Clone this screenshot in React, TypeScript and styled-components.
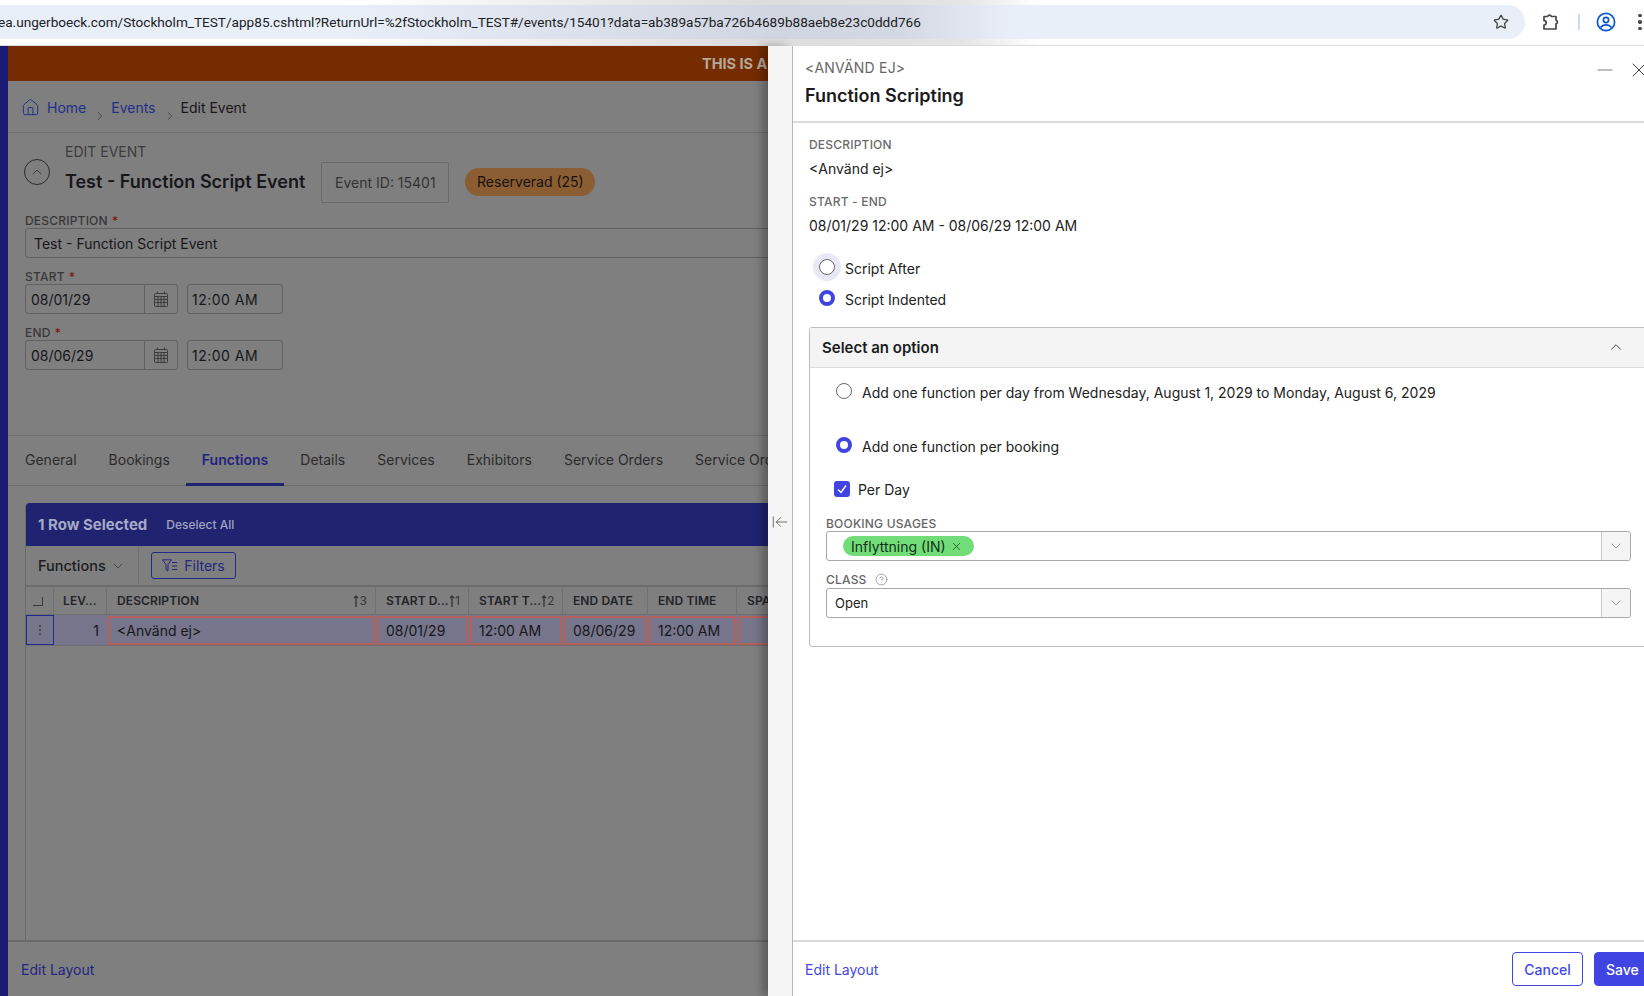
import styled, { createGlobalStyle } from "styled-components";
import { ChevronDown, ChevronUp, ChevronRight, Home, Minus, X, Star, CircleHelp, ArrowLeftToLine, EllipsisVertical } from "lucide-react";

const GlobalStyle = createGlobalStyle`
  html, body { margin: 0; padding: 0; background: #fff; }
  body { font-family: Inter, "Liberation Sans", sans-serif; color: #1d1d22; overflow: hidden; }
  * { box-sizing: border-box; }
`;

const Screen = styled.div`
  width: 1644px;
  height: 996px;
  overflow: hidden;
  display: flex;
  flex-direction: column;
`;

/* browser chrome */
const ChromeBar = styled.header`
  height: 46px;
  flex: none;
  display: flex;
  align-items: flex-start;
  padding-top: 5px;
  border-bottom: 1px solid #dadce0;
  background: linear-gradient(90deg, #fff 360px, #dcdcdc 760px, #e4e4e4 960px, #fff 1040px);
`;
const UrlPill = styled.div`
  width: 1525px;
  height: 34px;
  flex: none;
  display: flex;
  align-items: center;
  border-radius: 0 17px 17px 0;
  background: linear-gradient(90deg, #e9eff8 340px, #d0d5df 780px, #d3d8e2 900px, #e9eff8 1010px);
  padding-right: 16px;
  overflow: hidden;
`;
const UrlText = styled.div`
  flex: 1;
  margin-left: -2px;
  font-family: Roboto, sans-serif;
  font-size: 13.6px;
  color: #202124;
  white-space: nowrap;
`;
const ChromeIcons = styled.div`
  display: flex;
  align-items: center;
  height: 34px;
  margin-left: 17px;
`;
const Separator = styled.div`
  width: 2px;
  height: 16px;
  background: #c9dcf5;
  margin: 0 16px 0 18px;
`;
const Dots = styled.div`
  display: flex;
  flex-direction: column;
  gap: 3px;
  margin-left: 22px;
  & > i { width: 3.5px; height: 3.5px; border-radius: 50%; background: #444746; display: block; }
`;

const Main = styled.div`
  flex: 1;
  display: flex;
  min-height: 0;
`;

/* dimmed page behind the drawer */
const Rail = styled.div`
  width: 8px;
  flex: none;
  background: #1a1a72;
`;
const Page = styled.div`
  width: 760px;
  flex: none;
  background: #7f7f7f;
  display: flex;
  flex-direction: column;
  overflow: hidden;
  font-size: 14px;
`;
const Banner = styled.div`
  height: 35px;
  flex: none;
  background: #752c00;
  color: #b5a89c;
  font-weight: 700;
  font-size: 14.5px;
  display: flex;
  align-items: center;
  padding-left: 694px;
  white-space: nowrap;
`;
const Breadcrumbs = styled.nav`
  height: 52px;
  flex: none;
  display: flex;
  align-items: center;
  padding: 2px 0 0 13px;
  border-bottom: 1px solid #6e6e6e;
`;
const Crumb = styled.span<{ $link?: boolean }>`
  color: ${(p) => (p.$link ? "#1f2f8c" : "#18181c")};
  display: inline-flex;
  align-items: center;
  gap: 7px;
`;
const CrumbSep = styled.span`
  color: #2c2c2c;
  display: inline-flex;
  margin: 16px 4px 0 7px;
`;
const EventHead = styled.div`
  display: flex;
  align-items: center;
  height: 74px;
  padding-left: 16px;
  flex: none;
`;
const CollapseBtn = styled.div`
  width: 26px;
  height: 26px;
  margin-top: 4px;
  border: 1.2px solid #2c2c2c;
  border-radius: 50%;
  display: flex;
  align-items: center;
  justify-content: center;
  color: #2c2c2c;
  margin-right: 15px;
`;
const HeadText = styled.div`
  display: flex;
  flex-direction: column;
  gap: 11px;
  margin-top: -4px;
`;
const Eyebrow = styled.div`
  font-size: 14px;
  color: #3c3c3c;
  line-height: 17px;
`;
const EventTitle = styled.div`
  font-size: 18px;
  font-weight: 600;
  color: #17171b;
  line-height: 22px;
`;
const EventId = styled.div`
  margin-left: 16px;
  width: 128px;
  height: 41px;
  border: 1px solid #6a6a6a;
  border-radius: 2px;
  display: flex;
  align-items: center;
  justify-content: center;
  color: #333;
  font-size: 14px;
  margin-top: 25px;
`;
const StatusBadge = styled.div`
  margin-left: 16px;
  width: 130px;
  height: 28px;
  border-radius: 14px;
  background: #8a5d33;
  display: flex;
  align-items: center;
  justify-content: center;
  color: #17120c;
  font-size: 14px;
  margin-top: 23px;
`;
const Form = styled.div`
  padding: 6px 0 0 17px;
  flex: none;
  height: 229px;
  border-bottom: 1px solid #6e6e6e;
`;
const DarkLabel = styled.div`
  font-size: 12px;
  font-weight: 500;
  line-height: 15px;
  color: #383838;
  letter-spacing: 0.2px;
  & > b { color: #7a1f14; font-weight: 600; margin-left: 4px; }
`;
const DarkInput = styled.div`
  width: 760px;
  height: 30px;
  border: 1px solid #616161;
  border-radius: 3px;
  display: flex;
  align-items: center;
  padding-left: 8px;
  color: #17171b;
  font-size: 14px;
  white-space: nowrap;
  flex: none;
`;
const TimeInput = styled(DarkInput)`
  width: 96px;
  padding-left: 4px;
  letter-spacing: 0.5px;
`;
const DateRow = styled.div`
  display: flex;
  gap: 9px;
  margin-bottom: 11px;
`;
const DateBox = styled.div`
  width: 153px;
  height: 30px;
  border: 1px solid #616161;
  border-radius: 3px;
  display: flex;
  align-items: center;
  color: #17171b;
`;
const DateValue = styled.div`
  flex: 1;
  padding-left: 5px;
`;
const CalendarCell = styled.div`
  width: 33px;
  height: 100%;
  border-left: 1px solid #616161;
  display: flex;
  align-items: center;
  justify-content: center;
`;
const DescGroup = styled.div`
  margin-bottom: 11px;
`;
const Tabs = styled.div`
  display: flex;
  height: 50px;
  flex: none;
  padding-left: 1px;
  border-bottom: 1px solid #6e6e6e;
  white-space: nowrap;
`;
const Tab = styled.div<{ $active?: boolean }>`
  padding: 0 16px 1px;
  display: flex;
  align-items: center;
  height: 50px;
  color: ${(p) => (p.$active ? "#1f2380" : "#2b2b2b")};
  font-weight: ${(p) => (p.$active ? 600 : 400)};
  border-bottom: 3px solid ${(p) => (p.$active ? "#1f2370" : "transparent")};
`;
const GridWrap = styled.div`
  flex: 1;
  min-height: 0;
  margin: 17px 0 0 17px;
  width: 760px;
  border-left: 1px solid #6a6a6a;
  border-top-left-radius: 4px;
  display: flex;
  flex-direction: column;
`;
const SelectionBar = styled.div`
  height: 43px;
  flex: none;
  background: #1f2370;
  border-top-left-radius: 4px;
  display: flex;
  align-items: center;
  padding-left: 12px;
  color: #a9abc4;
`;
const SelectedCount = styled.span`
  font-weight: 700;
  font-size: 15px;
  color: #a6a9c6;
`;
const Deselect = styled.span`
  font-size: 12px;
  font-weight: 500;
  margin-left: 19px;
  color: #a0a3c0;
`;
const GridTools = styled.div`
  height: 41px;
  flex: none;
  display: flex;
  align-items: center;
  border-bottom: 2px solid #6c6c6c;
`;
const ViewPicker = styled.div`
  width: 113px;
  height: 100%;
  padding-left: 12px;
  display: flex;
  align-items: center;
  gap: 4px;
  color: #1c1c22;
  font-weight: 500;
  font-size: 14.5px;
  border-right: 1px solid #717171;
`;
const FilterBtn = styled.div`
  margin-left: 12px;
  width: 85px;
  height: 27px;
  border: 1px solid #24288a;
  border-radius: 3px;
  display: flex;
  align-items: center;
  justify-content: center;
  gap: 6px;
  color: #23277f;
`;
const GridRow = styled.div<{ $body?: boolean }>`
  display: grid;
  grid-template-columns: 28px 53px 269px 93px 94px 85px 89px 49px;
  height: ${(p) => (p.$body ? "31px" : "28px")};
  flex: none;
  border-bottom: 1px solid #6f6f6f;
  background: ${(p) => (p.$body ? "#76758b" : "transparent")};
`;
const HeadCell = styled.div`
  border-right: 1px solid #727272;
  display: flex;
  align-items: center;
  justify-content: space-between;
  padding: 0 8px 0 10px;
  font-size: 12px;
  font-weight: 600;
  color: #232328;
  white-space: nowrap;
  overflow: hidden;
  letter-spacing: 0.1px;
`;
const LevelHead = styled(HeadCell)`
  padding-left: 9px;
`;
const SortMark = styled.span`
  display: inline-flex;
  align-items: center;
  font-weight: 400;
  font-size: 12px;
  color: #38383c;
`;
const TickBox = styled.span`
  width: 10px;
  height: 9px;
  margin: 2px 0 0 -3px;
  border-right: 1.5px solid #3a3a3a;
  border-bottom: 1.5px solid #3a3a3a;
  display: block;
`;
const HandleCell = styled.div`
  border: 1px solid #24288f;
  background: #77768a;
  display: flex;
  align-items: center;
  justify-content: center;
  color: #4a4a4a;
`;
const LevelCell = styled.div`
  display: flex;
  align-items: center;
  justify-content: flex-end;
  padding-right: 8px;
  font-size: 14px;
  color: #17171b;
`;
const ErrorCell = styled.div`
  border: 2px solid #b4605a;
  margin: 1px 1px 0;
  display: flex;
  align-items: center;
  padding-left: 7px;
  font-size: 14px;
  color: #17171b;
  white-space: nowrap;
  overflow: hidden;
`;
const PageFooter = styled.div`
  height: 56px;
  flex: none;
  display: flex;
  align-items: center;
  border-top: 2px solid #6a6a6a;
  padding-left: 13px;
`;
const EditLayout = styled.span<{ $dim?: boolean }>`
  color: ${(p) => (p.$dim ? "#22267f" : "#4249e3")};
  font-size: 14px;
`;

/* drawer */
const Gutter = styled.div`
  width: 24px;
  flex: none;
  background: #f5f5f5;
  box-shadow: -6px 0 10px rgba(0, 0, 0, 0.28);
  position: relative;
  display: flex;
  align-items: center;
  justify-content: center;
  color: #555;
  padding-top: 1px;
`;
const Drawer = styled.aside`
  width: 900px;
  flex: none;
  background: #fff;
  border-left: 1px solid #b8b8b8;
  display: flex;
  flex-direction: column;
  font-size: 14px;
  position: relative;
`;
const DrawerHead = styled.div`
  height: 77px;
  flex: none;
  width: 852px;
  padding: 13px 0 0 12px;
  border-bottom: 2px solid #dcdcdc;
  position: relative;
`;
const HeadSub = styled.div`
  color: #666;
  font-size: 14px;
  line-height: 17px;
  letter-spacing: 0.2px;
`;
const HeadTitle = styled.div`
  font-size: 18px;
  font-weight: 600;
  line-height: 22px;
  margin-top: 9px;
  color: #1b1b20;
`;
const HeadActions = styled.div`
  position: absolute;
  top: 12px;
  right: -6px;
  display: flex;
  align-items: center;
  gap: 10px;
  color: #a9a9a9;
`;
const DrawerBody = styled.div`
  flex: 1;
  min-height: 0;
  padding: 14px 0 0 16px;
`;
const MetaLabel = styled.div`
  font-size: 12px;
  font-weight: 500;
  color: #6b6b6b;
  line-height: 15px;
  letter-spacing: 0.2px;
`;
const MetaValue = styled.div`
  font-size: 14px;
  line-height: 17px;
  margin: 8px 0 17px;
  color: #222;
`;
const RadioGroup = styled.div`
  margin-top: 19px;
`;
const RadioRow = styled.div<{ $h?: number; $indent?: number; $mt?: number }>`
  display: flex;
  align-items: center;
  height: ${(p) => p.$h ?? 31}px;
  padding-left: ${(p) => p.$indent ?? 10}px;
  margin-top: ${(p) => p.$mt ?? 0}px;
  gap: 10px;
  color: #222;
`;
const RadioDot = styled.span<{ $on?: boolean; $halo?: boolean }>`
  width: 16px;
  height: 16px;
  margin-top: -3px;
  border-radius: 50%;
  flex: none;
  background: #fff;
  border: ${(p) => (p.$on ? "4.5px solid #4045e2" : "1px solid #6a6a6a")};
  box-shadow: ${(p) => (p.$halo ? "0 0 0 6px #e8e8f6" : "none")};
`;
const OptionBox = styled.section`
  margin-top: 12px;
  width: 880px;
  height: 320px;
  border: 1px solid #bdbdbd;
  border-radius: 3px;
`;
const OptionHead = styled.div`
  height: 40px;
  background: #f4f4f4;
  border-bottom: 1px solid #dcdcdc;
  display: flex;
  align-items: center;
  padding: 0 0 0 12px;
  font-size: 15px;
  font-weight: 600;
  color: #1b1b20;
  position: relative;
`;
const Chevron = styled.span`
  position: absolute;
  left: 797px;
  top: 10px;
  color: #333;
  display: flex;
`;
const OptionBody = styled.div`
  padding-top: 7px;
`;
const CheckRow = styled.div`
  display: flex;
  align-items: center;
  gap: 8px;
  padding-left: 24px;
  height: 20px;
  margin: 16px 0 17px;
  color: #222;
`;
const CheckBox = styled.span`
  width: 16px;
  height: 16px;
  border-radius: 3px;
  background: #4045e2;
  display: flex;
  align-items: center;
  justify-content: center;
`;
const FieldLabel = styled(MetaLabel)`
  margin-left: 16px;
  display: flex;
  align-items: center;
  gap: 8px;
  color: #666;
`;
const SelectField = styled.div`
  margin: 0 0 11px 16px;
  width: 805px;
  height: 30px;
  border: 1px solid #a8a8a8;
  border-radius: 3px;
  display: flex;
  align-items: center;
`;
const ClassField = styled(SelectField)`
  margin-top: 1px;
`;
const SelectValue = styled.div`
  flex: 1;
  padding-left: 8px;
  font-size: 13px;
  color: #222;
`;
const ChipArea = styled.div`
  flex: 1;
  padding-left: 16px;
`;
const Chip = styled.span`
  display: inline-flex;
  align-items: center;
  gap: 4px;
  height: 20px;
  width: 131px;
  padding-left: 8px;
  border-radius: 10px;
  background: #72dd78;
  color: #10301a;
  font-size: 14px;
`;
const SelectArrow = styled.div`
  width: 29px;
  height: 100%;
  flex: none;
  background: #f5f5f5;
  border-left: 1px solid #c8c8c8;
  display: flex;
  align-items: center;
  justify-content: center;
  color: #777;
  border-radius: 0 3px 3px 0;
`;
const DrawerFoot = styled.div`
  height: 56px;
  flex: none;
  width: 899px;
  display: flex;
  align-items: center;
  border-top: 2px solid #d9d9d9;
  padding-left: 12px;
`;
const Btn = styled.button<{ $primary?: boolean }>`
  height: 34px;
  border-radius: 4px;
  font-family: inherit;
  font-size: 14px;
  font-weight: 500;
  border: 1px solid #4045e2;
  background: ${(p) => (p.$primary ? "#4045e2" : "#fff")};
  color: ${(p) => (p.$primary ? "#fff" : "#4249e3")};
  width: ${(p) => (p.$primary ? "60px" : "71px")};
  margin-left: ${(p) => (p.$primary ? "11px" : "auto")};
  margin-right: ${(p) => (p.$primary ? "38px" : "0")};
  padding: 0;
  text-align: ${(p) => (p.$primary ? "left" : "center")};
  padding-left: ${(p) => (p.$primary ? "11px" : "0")};
`;

const Calendar = () => (
  <svg width="14" height="16" viewBox="0 0 14 16" fill="none" stroke="#3d3d3d" strokeWidth="1">
    <rect x="0.5" y="2.5" width="13" height="13" rx="1" />
    <path d="M0.5 5.5h13M0.5 8.5h13M0.5 11.5h13M4 5.5v10M7 5.5v10M10 5.5v10M3.5 0.5v2M10.5 0.5v2" />
  </svg>
);

const Puzzle = () => (
  <svg width="18" height="18" viewBox="0 0 18 18" fill="none" stroke="#444746" strokeWidth="1.7" strokeLinejoin="round">
    <path d="M2 3.5h3.6a2 2 0 0 1 3.8 0h4.6v3.6a2 2 0 0 1 0 3.8v5.1H2v-4a2 2 0 0 0 0-4.4z" />
  </svg>
);

const Profile = () => (
  <svg width="20" height="20" viewBox="0 0 20 20" fill="none" stroke="#0b57d0" strokeWidth="1.7">
    <circle cx="10" cy="10" r="8.6" />
    <circle cx="10" cy="8" r="2.6" />
    <path d="M4.6 15.6c1.4-2 3.4-2.7 5.4-2.7s4 .7 5.4 2.7" />
  </svg>
);

const FilterIcon = () => (
  <svg width="16" height="13" viewBox="0 0 16 13" fill="none" stroke="#23277f" strokeWidth="1">
    <path d="M0.5 0.8h9L6 5.5v6.5L4 10.5v-5zM10 3.5h5M10 7h5M10 10.5h5" />
  </svg>
);

const SortUp = ({ n }: { n: number }) => (
  <SortMark>
    <svg width="6" height="12" viewBox="0 0 6 12" fill="none" stroke="#38383c" strokeWidth="1.4">
      <path d="M3 12V1M1 3l2-2 2 2" />
    </svg>
    {n}
  </SortMark>
);

export default function App() {
  return (
    <Screen>
      <GlobalStyle />
      <ChromeBar>
        <UrlPill>
          <UrlText>ea.ungerboeck.com/Stockholm_TEST/app85.cshtml?ReturnUrl=%2fStockholm_TEST#/events/15401?data=ab389a57ba726b4689b88aeb8e23c0ddd766</UrlText>
          <Star size={16} color="#444746" strokeWidth={2} />
        </UrlPill>
        <ChromeIcons>
          <Puzzle />
          <Separator />
          <Profile />
          <Dots><i /><i /><i /></Dots>
        </ChromeIcons>
      </ChromeBar>
      <Main>
        <Rail />
        <Page>
          <Banner>THIS IS A</Banner>
          <Breadcrumbs>
            <Crumb $link><Home size={19} strokeWidth={1.2} />Home</Crumb>
            <CrumbSep><ChevronRight size={14} strokeWidth={1.1} /></CrumbSep>
            <Crumb $link>Events</Crumb>
            <CrumbSep><ChevronRight size={14} strokeWidth={1.1} /></CrumbSep>
            <Crumb>Edit Event</Crumb>
          </Breadcrumbs>
          <EventHead>
            <CollapseBtn><ChevronUp size={16} strokeWidth={1.2} /></CollapseBtn>
            <HeadText>
              <Eyebrow>EDIT EVENT</Eyebrow>
              <EventTitle>Test - Function Script Event</EventTitle>
            </HeadText>
            <EventId>Event ID: 15401</EventId>
            <StatusBadge>Reserverad (25)</StatusBadge>
          </EventHead>
          <Form>
            <DescGroup>
              <DarkLabel>DESCRIPTION<b>*</b></DarkLabel>
              <DarkInput>Test - Function Script Event</DarkInput>
            </DescGroup>
            <DarkLabel>START<b>*</b></DarkLabel>
            <DateRow>
              <DateBox><DateValue>08/01/29</DateValue><CalendarCell><Calendar /></CalendarCell></DateBox>
              <TimeInput>12:00 AM</TimeInput>
            </DateRow>
            <DarkLabel>END<b>*</b></DarkLabel>
            <DateRow>
              <DateBox><DateValue>08/06/29</DateValue><CalendarCell><Calendar /></CalendarCell></DateBox>
              <TimeInput>12:00 AM</TimeInput>
            </DateRow>
          </Form>
          <Tabs>
            <Tab>General</Tab>
            <Tab>Bookings</Tab>
            <Tab $active>Functions</Tab>
            <Tab>Details</Tab>
            <Tab>Services</Tab>
            <Tab>Exhibitors</Tab>
            <Tab>Service Orders</Tab>
            <Tab>Service Orders</Tab>
          </Tabs>
          <GridWrap>
            <SelectionBar>
              <SelectedCount>1 Row Selected</SelectedCount>
              <Deselect>Deselect All</Deselect>
            </SelectionBar>
            <GridTools>
              <ViewPicker>Functions <ChevronDown size={16} strokeWidth={1.1} color="#333" /></ViewPicker>
              <FilterBtn><FilterIcon />Filters</FilterBtn>
            </GridTools>
            <GridRow>
              <HeadCell><TickBox /></HeadCell>
              <LevelHead>LEV...</LevelHead>
              <HeadCell>DESCRIPTION <SortUp n={3} /></HeadCell>
              <HeadCell>START D... <SortUp n={1} /></HeadCell>
              <HeadCell>START T... <SortUp n={2} /></HeadCell>
              <HeadCell>END DATE</HeadCell>
              <HeadCell>END TIME</HeadCell>
              <HeadCell>SPA</HeadCell>
            </GridRow>
            <GridRow $body>
              <HandleCell><EllipsisVertical size={14} strokeWidth={2} /></HandleCell>
              <LevelCell>1</LevelCell>
              <ErrorCell>&lt;Använd ej&gt;</ErrorCell>
              <ErrorCell>08/01/29</ErrorCell>
              <ErrorCell>12:00 AM</ErrorCell>
              <ErrorCell>08/06/29</ErrorCell>
              <ErrorCell>12:00 AM</ErrorCell>
              <ErrorCell />
            </GridRow>
          </GridWrap>
          <PageFooter><EditLayout $dim>Edit Layout</EditLayout></PageFooter>
        </Page>
        <Gutter><ArrowLeftToLine size={18} strokeWidth={1.1} /></Gutter>
        <Drawer>
          <DrawerHead>
            <HeadSub>&lt;ANVÄND EJ&gt;</HeadSub>
            <HeadTitle>Function Scripting</HeadTitle>
            <HeadActions>
              <Minus size={24} strokeWidth={1.3} />
              <X size={24} strokeWidth={1} color="#444" />
            </HeadActions>
          </DrawerHead>
          <DrawerBody>
            <MetaLabel>DESCRIPTION</MetaLabel>
            <MetaValue>&lt;Använd ej&gt;</MetaValue>
            <MetaLabel>START - END</MetaLabel>
            <MetaValue>08/01/29 12:00 AM - 08/06/29 12:00 AM</MetaValue>
            <RadioGroup>
              <RadioRow><RadioDot $halo />Script After</RadioRow>
              <RadioRow><RadioDot $on />Script Indented</RadioRow>
            </RadioGroup>
            <OptionBox>
              <OptionHead>
                Select an option
                <Chevron><ChevronUp size={18} strokeWidth={1.2} /></Chevron>
              </OptionHead>
              <OptionBody>
                <RadioRow $h={34} $indent={26}><RadioDot />Add one function per day from Wednesday, August 1, 2029 to Monday, August 6, 2029</RadioRow>
                <RadioRow $h={34} $indent={26} $mt={20}><RadioDot $on />Add one function per booking</RadioRow>
                <CheckRow>
                  <CheckBox>
                    <svg width="12" height="12" viewBox="0 0 12 12" fill="none" stroke="#fff" strokeWidth="1.3"><path d="M2 6.5l3 3 5-7" /></svg>
                  </CheckBox>
                  Per Day
                </CheckRow>
                <FieldLabel>BOOKING USAGES</FieldLabel>
                <SelectField>
                  <ChipArea><Chip>Inflyttning (IN) <X size={13} strokeWidth={1.2} /></Chip></ChipArea>
                  <SelectArrow><ChevronDown size={16} strokeWidth={1.1} /></SelectArrow>
                </SelectField>
                <FieldLabel>CLASS <CircleHelp size={13} strokeWidth={1.2} color="#777" /></FieldLabel>
                <ClassField>
                  <SelectValue>Open</SelectValue>
                  <SelectArrow><ChevronDown size={16} strokeWidth={1.1} /></SelectArrow>
                </ClassField>
              </OptionBody>
            </OptionBox>
          </DrawerBody>
          <DrawerFoot>
            <EditLayout>Edit Layout</EditLayout>
            <Btn>Cancel</Btn>
            <Btn $primary>Save</Btn>
          </DrawerFoot>
        </Drawer>
      </Main>
    </Screen>
  );
}
